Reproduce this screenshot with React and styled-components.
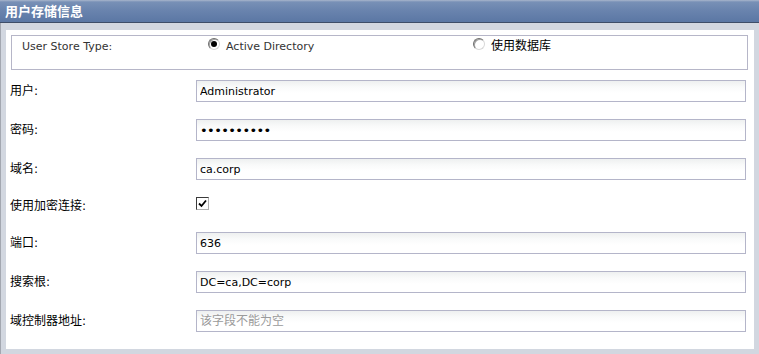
import React from "react";
import styled, { createGlobalStyle } from "styled-components";

const Global = createGlobalStyle`
  html, body { margin: 0; padding: 0; background: #d2d7e0; }
  body { font-family: "DejaVu Sans", "Noto Sans CJK SC", sans-serif; }
`;

const Frame = styled.div`
  width: 759px;
  height: 354px;
  box-sizing: border-box;
  background: #d2d7e0;
  border-left: 1px solid #a3a7b0;
  display: flex;
  flex-direction: column;
`;

const Header = styled.div`
  height: 22px;
  margin-left: -1px;
  border-bottom: 1px solid #3e4d68;
  background: linear-gradient(to bottom, #a9b6cc 0px, #7890b6 2px, #6a84ae 10px, #5b77a4 22px);
  color: #fff;
  font-family: "Noto Sans CJK SC", sans-serif;
  font-weight: bold;
  font-size: 13px;
  line-height: 22px;
  padding-left: 5px;
`;

const Body = styled.div`
  margin: 7px 5px 5px 5px;
  background: #fff;
  flex: 1;
  padding: 5px 6px 0 4px;
`;

const TypeBox = styled.div`
  margin-left: 1px;
  height: 32px;
  border: 1px solid #b6b6c8;
  padding: 1px 0 0 10px;
  display: grid;
  grid-template-columns: 186px 265px 1fr;
  align-items: start;
`;

const TypeLabel = styled.div`
  font-size: 11px;
  color: #333;
  line-height: 16px;
  padding-top: 2px;
`;

const Option = styled.label`
  display: flex;
  align-items: flex-start;
  gap: 6px;
  font-size: ${(p) => (p.$cjk ? "12px" : "11px")};
  font-family: ${(p) => (p.$cjk ? '"Noto Sans CJK SC", sans-serif' : '"DejaVu Sans", sans-serif')};
  color: ${(p) => (p.$cjk ? "#000" : "#333")};
  line-height: 16px;
`;

const OptionText = styled.span`
  padding-top: ${(p) => (p.$cjk ? "0px" : "2px")};
`;

const Radio = styled.span`
  width: 10px;
  height: 10px;
  border-radius: 50%;
  margin-top: 1px;
  border: 1px solid;
  border-color: #6e6e6e #d8d8d8 #d8d8d8 #6e6e6e;
  box-shadow: inset 1px 1px 0 #a0a0a0;
  background: #fff;
  display: flex;
  align-items: center;
  justify-content: center;
  flex: none;
  &::after {
    content: "";
    width: 6px;
    height: 6px;
    border-radius: 50%;
    background: ${(p) => (p.$checked ? "#000" : "transparent")};
  }
`;

const Rows = styled.div`
  margin-top: 10px;
  margin-right: 2px;
  display: flex;
  flex-direction: column;
  gap: 17px;
`;

const Row = styled.div`
  display: grid;
  grid-template-columns: 186px 1fr;
  align-items: ${(p) => (p.$top ? "start" : "center")};
  height: ${(p) => (p.$h ? p.$h : 22)}px;
`;

const Label = styled.div`
  font-family: "DejaVu Sans", "Noto Sans CJK SC", sans-serif;
  font-size: 12px;
  color: #000;
  line-height: 18px;
`;

const Input = styled.input`
  box-sizing: border-box;
  height: 22px;
  width: 100%;
  margin: 0;
  border: 1px solid #b4b5c9;
  border-radius: 0;
  background: linear-gradient(to bottom, #eef0f0 0px, #f9fafa 6px, #ffffff 12px);
  padding: 0 3px;
  font-family: "DejaVu Sans", "Noto Sans CJK SC", sans-serif;
  font-size: ${(p) => (p.type === "password" ? "13px" : "11px")};
  color: #000;
  outline: none;
  letter-spacing: ${(p) => (p.type === "password" ? "-0.6px" : "0")};
  &::placeholder {
    color: #9a9a9a;
    font-family: "Noto Sans CJK SC", sans-serif;
    font-size: 12px;
  }
`;

const Check = styled.span`
  width: 11px;
  height: 11px;
  border: 1px solid;
  border-color: #3a3a3a #b0b0b0 #b0b0b0 #3a3a3a;
  background: #fff;
  display: flex;
  align-items: center;
  justify-content: center;
`;

const fields = [
  { label: "用户:", value: "Administrator" },
  { label: "密码:", value: "abcdefghij", type: "password" },
  { label: "域名:", value: "ca.corp" },
  { label: "使用加密连接:", check: true },
  { label: "端口:", value: "636" },
  { label: "搜索根:", value: "DC=ca,DC=corp" },
  { label: "域控制器地址:", placeholder: "该字段不能为空" },
];

export default function App() {
  return (
    <>
      <Global />
      <Frame>
        <Header>用户存储信息</Header>
        <Body>
          <TypeBox>
            <TypeLabel>User Store Type:</TypeLabel>
            <Option>
              <Radio $checked />
              <OptionText>Active Directory</OptionText>
            </Option>
            <Option $cjk>
              <Radio />
              <OptionText $cjk>使用数据库</OptionText>
            </Option>
          </TypeBox>
          <Rows>
            {fields.map((f) =>
              f.check ? (
                <Row key={f.label} $h={18} $top>
                  <Label>{f.label}</Label>
                  <Check>
                    <svg width="9" height="9" viewBox="0 0 9 9">
                      <path d="M1 4.5 L3.5 7 L8 1.5" stroke="#000" strokeWidth="1.8" fill="none" />
                    </svg>
                  </Check>
                </Row>
              ) : (
                <Row key={f.label}>
                  <Label>{f.label}</Label>
                  <Input
                    type={f.type || "text"}
                    defaultValue={f.value}
                    placeholder={f.placeholder}
                    readOnly
                  />
                </Row>
              )
            )}
          </Rows>
        </Body>
      </Frame>
    </>
  );
}
